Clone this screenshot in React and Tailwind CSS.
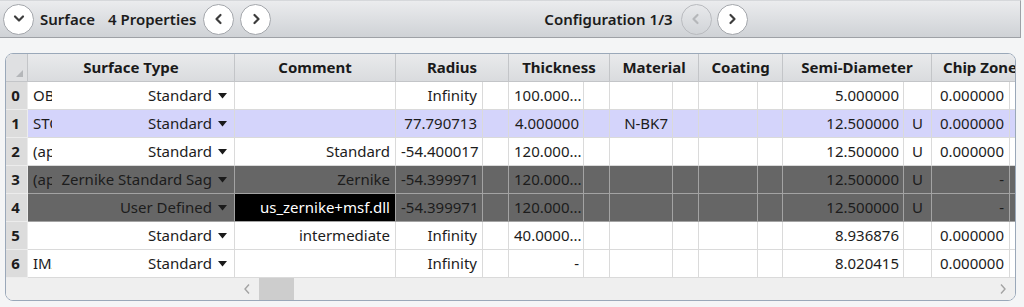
import React from "react"

const COLS = "grid grid-cols-[22px_207px_161px_87px_26px_75px_26px_63px_26px_59px_25px_121px_28px_78px_24px]"

const rows = [
  { n: "0", label: "OBJECT", type: "Standard", comment: "", radius: "Infinity", thick: "100.000...", mat: "", semi: "5.000000", semiU: "", chip: "0.000000" },
  { n: "1", label: "STOP", type: "Standard", comment: "", radius: "77.790713", thick: "4.000000", mat: "N-BK7", semi: "12.500000", semiU: "U", chip: "0.000000", tone: "sel" },
  { n: "2", label: "(aper)", type: "Standard", comment: "Standard", radius: "-54.400017", thick: "120.000...", mat: "", semi: "12.500000", semiU: "U", chip: "0.000000" },
  { n: "3", label: "(aper)", type: "Zernike Standard Sag", comment: "Zernike", radius: "-54.399971", thick: "120.000...", mat: "", semi: "12.500000", semiU: "U", chip: "-", tone: "dark" },
  { n: "4", label: "", type: "User Defined", comment: "us_zernike+msf.dll", radius: "-54.399971", thick: "120.000...", mat: "", semi: "12.500000", semiU: "U", chip: "-", tone: "dark", black: true },
  { n: "5", label: "", type: "Standard", comment: "intermediate", radius: "Infinity", thick: "40.0000...", mat: "", semi: "8.936876", semiU: "", chip: "0.000000" },
  { n: "6", label: "IMAGE", type: "Standard", comment: "", radius: "Infinity", thick: "-", mat: "", semi: "8.020415", semiU: "", chip: "0.000000" },
]

function Chevron({ dir, color = "#3c3c3c" }) {
  const pts = {
    down: "2,3.5 6,7.5 10,3.5",
    left: "7.5,2 3.5,6 7.5,10",
    right: "4.5,2 8.5,6 4.5,10",
  }[dir]
  return (
    <svg width="12" height="12" viewBox="0 0 12 12">
      <polyline points={pts} fill="none" stroke={color} strokeWidth="2.2" strokeLinecap="round" strokeLinejoin="round" />
    </svg>
  )
}

function RoundButton({ dir, disabled }) {
  return (
    <div
      className={
        "w-[31px] h-[31px] rounded-full flex items-center justify-center border " +
        (disabled ? "border-[#b9bbbf] bg-transparent" : "border-[#a3a6ab] bg-white")
      }
    >
      <Chevron dir={dir} color={disabled ? "#b5b7ba" : "#3c3c3c"} />
    </div>
  )
}

function Tri() {
  return (
    <svg width="9" height="6" viewBox="0 0 9 6" className="ml-[6px] shrink-0">
      <polygon points="0,0 9,0 4.5,5.5" fill="#1a1a1a" />
    </svg>
  )
}

function Cell({ children, className = "", dark, align = "right" }) {
  return (
    <div
      className={
        "h-[28px] border-r border-b overflow-hidden whitespace-nowrap leading-[27px] px-[5px] " +
        (align === "right" ? "text-right " : align === "center" ? "text-center " : "text-left ") +
        (dark ? "bg-[#666666] border-[#a3a3a3] " : "border-[#dadada] ") +
        className
      }
    >
      {children}
    </div>
  )
}

function Row({ r }) {
  const dark = r.tone === "dark"
  const bg = r.tone === "sel" ? "bg-[#d4d4fb]" : dark ? "" : "bg-white"
  return (
    <div className={COLS + " text-[15px] text-[#1c1c1c]"}>
      <div className="h-[28px] bg-[#dcdcdc] border-r border-b border-[#ececec] font-bold text-center leading-[27px] pr-[2px]">
        {r.n}
      </div>
      <div
        className={
          "h-[28px] border-r border-b flex items-center pl-[5px] pr-[7px] overflow-hidden whitespace-nowrap " +
          (dark ? "bg-[#666666] border-[#a3a3a3]" : bg + " border-[#dadada]")
        }
      >
        <div className="w-[19px] shrink-0 overflow-hidden">{r.label}</div>
        <div className="flex-1 flex items-center justify-end min-w-0 ml-[4px]">
          <span className="overflow-hidden">{r.type}</span>
          <Tri />
        </div>
      </div>
      <Cell dark={dark} className={r.black ? "!bg-black text-white" : bg}>{r.comment}</Cell>
      <Cell dark={dark} className={bg}>{r.radius}</Cell>
      <Cell dark={dark} className={bg}></Cell>
      <Cell dark={dark} className={bg + " pr-[4px]"}>{r.thick}</Cell>
      <Cell dark={dark} className={bg}></Cell>
      <Cell dark={dark} className={bg + " pr-[4px]"}>{r.mat}</Cell>
      <Cell dark={dark} className={bg}></Cell>
      <Cell dark={dark} className={bg}></Cell>
      <Cell dark={dark} className={bg}></Cell>
      <Cell dark={dark} className={bg + " pr-[4px]"}>{r.semi}</Cell>
      <Cell dark={dark} className={bg} align="center">{r.semiU}</Cell>
      <Cell dark={dark} className={bg}>{r.chip}</Cell>
      <Cell dark={dark} className={bg}></Cell>
    </div>
  )
}

function Header() {
  const h = "h-[28px] border-r border-b border-[#c3c5c8] text-center leading-[27px] font-bold overflow-hidden whitespace-nowrap"
  return (
    <div className={COLS + " text-[15px] text-[#1a1a1a] bg-gradient-to-b from-[#e9eaec] to-[#d9dbde]"}>
      <div className="h-[28px] border-r border-b border-[#c3c5c8] relative bg-[#dfe0e2]">
        <svg width="7" height="7" viewBox="0 0 7 7" className="absolute right-[4px] bottom-[4px]">
          <polygon points="7,0 7,7 0,7" fill="#b4b6b9" />
        </svg>
      </div>
      <div className={h}>Surface Type</div>
      <div className={h}>Comment</div>
      <div className={h + " col-span-2"}>Radius</div>
      <div className={h + " col-span-2"}>Thickness</div>
      <div className={h + " col-span-2"}>Material</div>
      <div className={h + " col-span-2"}>Coating</div>
      <div className={h + " col-span-2"}>Semi-Diameter</div>
      <div className={h + " col-span-2 text-left pl-[11px]"}>Chip Zone</div>
    </div>
  )
}

export default function App() {
  return (
    <div
      className="w-[1024px] h-[307px] overflow-hidden bg-[#f4f5f6] text-[#1c1c1c]"
      style={{ fontFamily: '"Noto Sans", "Open Sans", sans-serif' }}
    >
      {/* toolbar */}
      <div className="w-[1021px] h-[38px] border-t border-[#d6d8db] border-b border-r border-b-[#9ea1a6] border-r-[#9ea1a6] bg-gradient-to-b from-[#ebecee] to-[#cfd2d6] flex items-center pl-[3px] text-[15px] font-semibold">
        <RoundButton dir="down" />
        <span className="ml-[6px]">Surface</span>
        <span className="ml-[13px]">4 Properties</span>
        <div className="ml-[7px]">
          <RoundButton dir="left" />
        </div>
        <div className="ml-[6px]">
          <RoundButton dir="right" />
        </div>
        <span className="ml-[273px]">Configuration 1/3</span>
        <div className="ml-[8px]">
          <RoundButton dir="left" disabled />
        </div>
        <div className="ml-[5px]">
          <RoundButton dir="right" />
        </div>
      </div>

      {/* table */}
      <div className="ml-[5px] mt-[15px] w-[1011px] border border-[#9aa8b9] rounded-[8px] overflow-hidden bg-white">
        <Header />
        {rows.map((r) => (
          <Row key={r.n} r={r} />
        ))}
        <div className="h-[22px] flex bg-[#efefef]">
          <div className="w-[229px] shrink-0"></div>
          <div className="w-[24px] shrink-0 flex items-center justify-center">
            <svg width="8" height="12" viewBox="0 0 8 12">
              <polyline points="6,1.5 2,6 6,10.5" fill="none" stroke="#a3a3a3" strokeWidth="1.4" />
            </svg>
          </div>
          <div className="w-[35px] shrink-0 bg-[#cdcdcd]"></div>
          <div className="flex-1"></div>
          <div className="w-[24px] shrink-0 flex items-center justify-center">
            <svg width="8" height="12" viewBox="0 0 8 12">
              <polyline points="2,1.5 6,6 2,10.5" fill="none" stroke="#a3a3a3" strokeWidth="1.4" />
            </svg>
          </div>
        </div>
      </div>
    </div>
  )
}
